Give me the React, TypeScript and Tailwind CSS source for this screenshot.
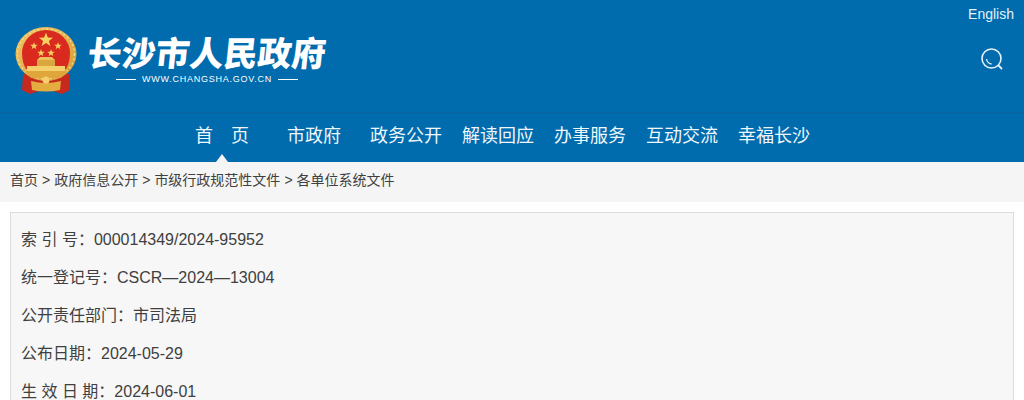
const font = "font-['Liberation_Sans','Noto_Sans_CJK_SC',sans-serif]";

const navItems = [
  { label: "首　页", active: true },
  { label: "市政府", active: false },
  { label: "政务公开", active: false },
  { label: "解读回应", active: false },
  { label: "办事服务", active: false },
  { label: "互动交流", active: false },
  { label: "幸福长沙", active: false },
];

const crumbs = ["首页", "政府信息公开", "市级行政规范性文件", "各单位系统文件"];

const rows = [
  { label: "索 引 号：", value: "000014349/2024-95952" },
  { label: "统一登记号：", value: "CSCR—2024—13004" },
  { label: "公开责任部门：", value: "市司法局" },
  { label: "公布日期：", value: "2024-05-29" },
  { label: "生 效 日 期：", value: "2024-06-01" },
];

function Emblem() {
  const star = (cx: number, cy: number, r: number) => {
    const pts: string[] = [];
    for (let i = 0; i < 10; i++) {
      const rad = i % 2 === 0 ? r : r * 0.4;
      const a = -Math.PI / 2 + (i * Math.PI) / 5;
      pts.push(`${(cx + rad * Math.cos(a)).toFixed(1)},${(cy + rad * Math.sin(a)).toFixed(1)}`);
    }
    return <polygon points={pts.join(" ")} fill="#f6d25e" />;
  };
  return (
    <svg width="62" height="68" viewBox="0 0 62 68" className="shrink-0">
      <defs>
        <linearGradient id="gold" x1="0" y1="0" x2="1" y2="1">
          <stop offset="0" stopColor="#f0c768" />
          <stop offset="1" stopColor="#d69a34" />
        </linearGradient>
      </defs>
      {/* ribbons */}
      <path d="M8 48 L7 64 L15 68 L24 65 L38 65 L47 68 L55 64 L54 48 Z" fill="#c8291f" />
      {/* wheat ring */}
      <ellipse cx="31" cy="28" rx="30.5" ry="27" fill="url(#gold)" />
      <ellipse cx="31" cy="28" rx="28.5" ry="25" fill="none" stroke="#f6dc92" strokeWidth="1.3" strokeDasharray="2 2.5" />
      {/* red field */}
      <path d="M7 27 A24 23 0 0 1 55 27 Q55 36 51 43 L11 43 Q7 36 7 27 Z" fill="#d92a1f" />
      {star(31, 14, 7.5)}
      {star(19, 20, 4)}
      {star(43, 20, 4)}
      {star(26, 27, 4)}
      {star(36, 27, 4)}
      {/* gate */}
      <path d="M25 31 L37 31 L40 34 L22 34 Z" fill="#ecc05a" />
      <rect x="22" y="34" width="18" height="6" fill="#d9a63f" />
      <rect x="12" y="40" width="38" height="5" fill="#f3d06c" />
      <path d="M10 45 L52 45 L46 52 L16 52 Z" fill="#e0a63c" />
      {/* knot and band */}
      <path d="M16 55 Q31 59 46 55 L45 64 Q31 67 17 64 Z" fill="#e5ad40" />
      <circle cx="31" cy="54" r="3.5" fill="#f3d06c" />
    </svg>
  );
}

export default function App() {
  return (
    <div className={`${font} h-[400px] overflow-hidden bg-white`}>
      <header className="relative h-[112px] bg-[#006bad] pl-[15px] pt-[26px]">
        <a className="absolute right-[10px] top-[5px] text-sm leading-[18px] text-[#e3f2fb]">English</a>
        <div className="flex items-start gap-[11px]">
          <Emblem />
          <div className="flex flex-col items-center pt-[6px]">
            <div className="skew-x-[-6deg] font-['Noto_Sans_CJK_SC',sans-serif] text-[34px] leading-[40px] font-black whitespace-nowrap text-white">
              长沙市人民政府
            </div>
            <div className="mt-[1px] flex items-center gap-[6px]">
              <span className="h-px w-[20px] bg-white" />
              <span className="text-[9px] leading-[12px] tracking-[0.75px] text-white">WWW.CHANGSHA.GOV.CN</span>
              <span className="h-px w-[20px] bg-white" />
            </div>
          </div>
        </div>
        <svg width="26" height="26" viewBox="0 0 26 26" fill="none" className="absolute right-[19px] top-[46px]" stroke="#e8f4fb">
          <circle cx="12.5" cy="12.5" r="9.5" strokeWidth="1.6" />
          <path d="M7.5 13 a6 6 0 0 0 5 5" strokeWidth="1.3" />
          <path d="M19.5 19.5 L23 23" strokeWidth="1.8" />
        </svg>
      </header>

      <nav className="flex h-[50px] justify-center border-t border-[#0e639c] bg-[#006bad] pr-[28px]">
        {navItems.map((item) => (
          <a key={item.label} className="relative flex w-[92px] items-center justify-center pb-[2px] text-[18px] whitespace-nowrap text-[#eef7fc]">
            {item.label}
            {item.active && (
              <span className="absolute bottom-0 left-1/2 h-0 w-0 -translate-x-1/2 border-x-[6px] border-b-[8px] border-x-transparent border-b-[#f5f5f5]" />
            )}
          </a>
        ))}
      </nav>

      <div className="flex h-[40px] items-center gap-[4px] bg-[#f5f5f5] px-[10px] pb-[3px] text-[14px] text-[#404040]">
        {crumbs.map((c, i) => (
          <span key={c} className="flex items-center gap-[4px]">
            {i > 0 && <span>&gt;</span>}
            {c}
          </span>
        ))}
      </div>

      <main className="mx-[10px] mt-[10px] border border-[#dcdcdc] bg-[#f7f7f7] px-[10px] pt-[8px]">
        {rows.map((r) => (
          <p key={r.label} className="h-[38px] text-[16px] leading-[38px] whitespace-nowrap text-[#404040]">
            {r.label}
            {r.value}
          </p>
        ))}
      </main>
    </div>
  );
}
